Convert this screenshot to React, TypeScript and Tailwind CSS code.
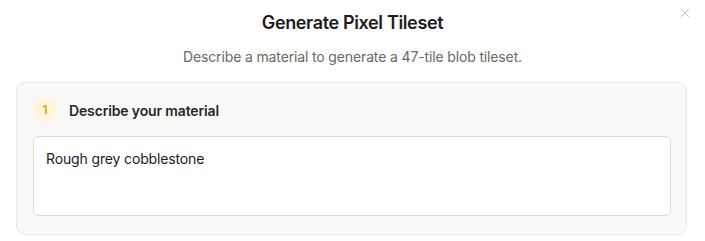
import { X } from "lucide-react";

const App = () => {
  return (
    <div
      className="relative h-[241px] w-[705px] overflow-hidden bg-white px-4"
      style={{ fontFamily: "Inter, 'Noto Sans', sans-serif" }}
    >
      <button className="absolute right-[12px] top-[5px] text-[#c4c4c4]">
        <X size={16} strokeWidth={1.5} />
      </button>
      <h1 className="pt-[12px] text-center text-[18px] font-semibold leading-[22px] tracking-[-0.02em] text-[#1c1b22]">
        Generate Pixel Tileset
      </h1>
      <p className="mt-[13px] text-center text-[14px] leading-[20px] tracking-[-0.01em] text-[#6b6862]">
        Describe a material to generate a 47-tile blob tileset.
      </p>
      <div className="mt-[15px] w-[671px] rounded-[9px] border border-[#ecebe6] bg-[#f9f9f7] px-4 pb-[18px] pt-[15px]">
        <div className="flex items-center gap-[12px]">
          <span className="flex h-[24px] w-[24px] items-center justify-center rounded-full bg-[#fff6dc] text-[12px] font-semibold text-[#d9a520]">
            1
          </span>
          <span className="text-[14px] font-semibold tracking-[-0.01em] text-[#28262d]">
            Describe your material
          </span>
        </div>
        <textarea
          className="mt-[14px] block h-[80px] w-[638px] resize-none rounded-[6px] border border-[#dedbd3] bg-white px-3 py-[12px] text-[14px] leading-[20px] tracking-[-0.01em] text-[#1c1b22] outline-none"
          defaultValue="Rough grey cobblestone"
        />
      </div>
    </div>
  );
};

export default App;
